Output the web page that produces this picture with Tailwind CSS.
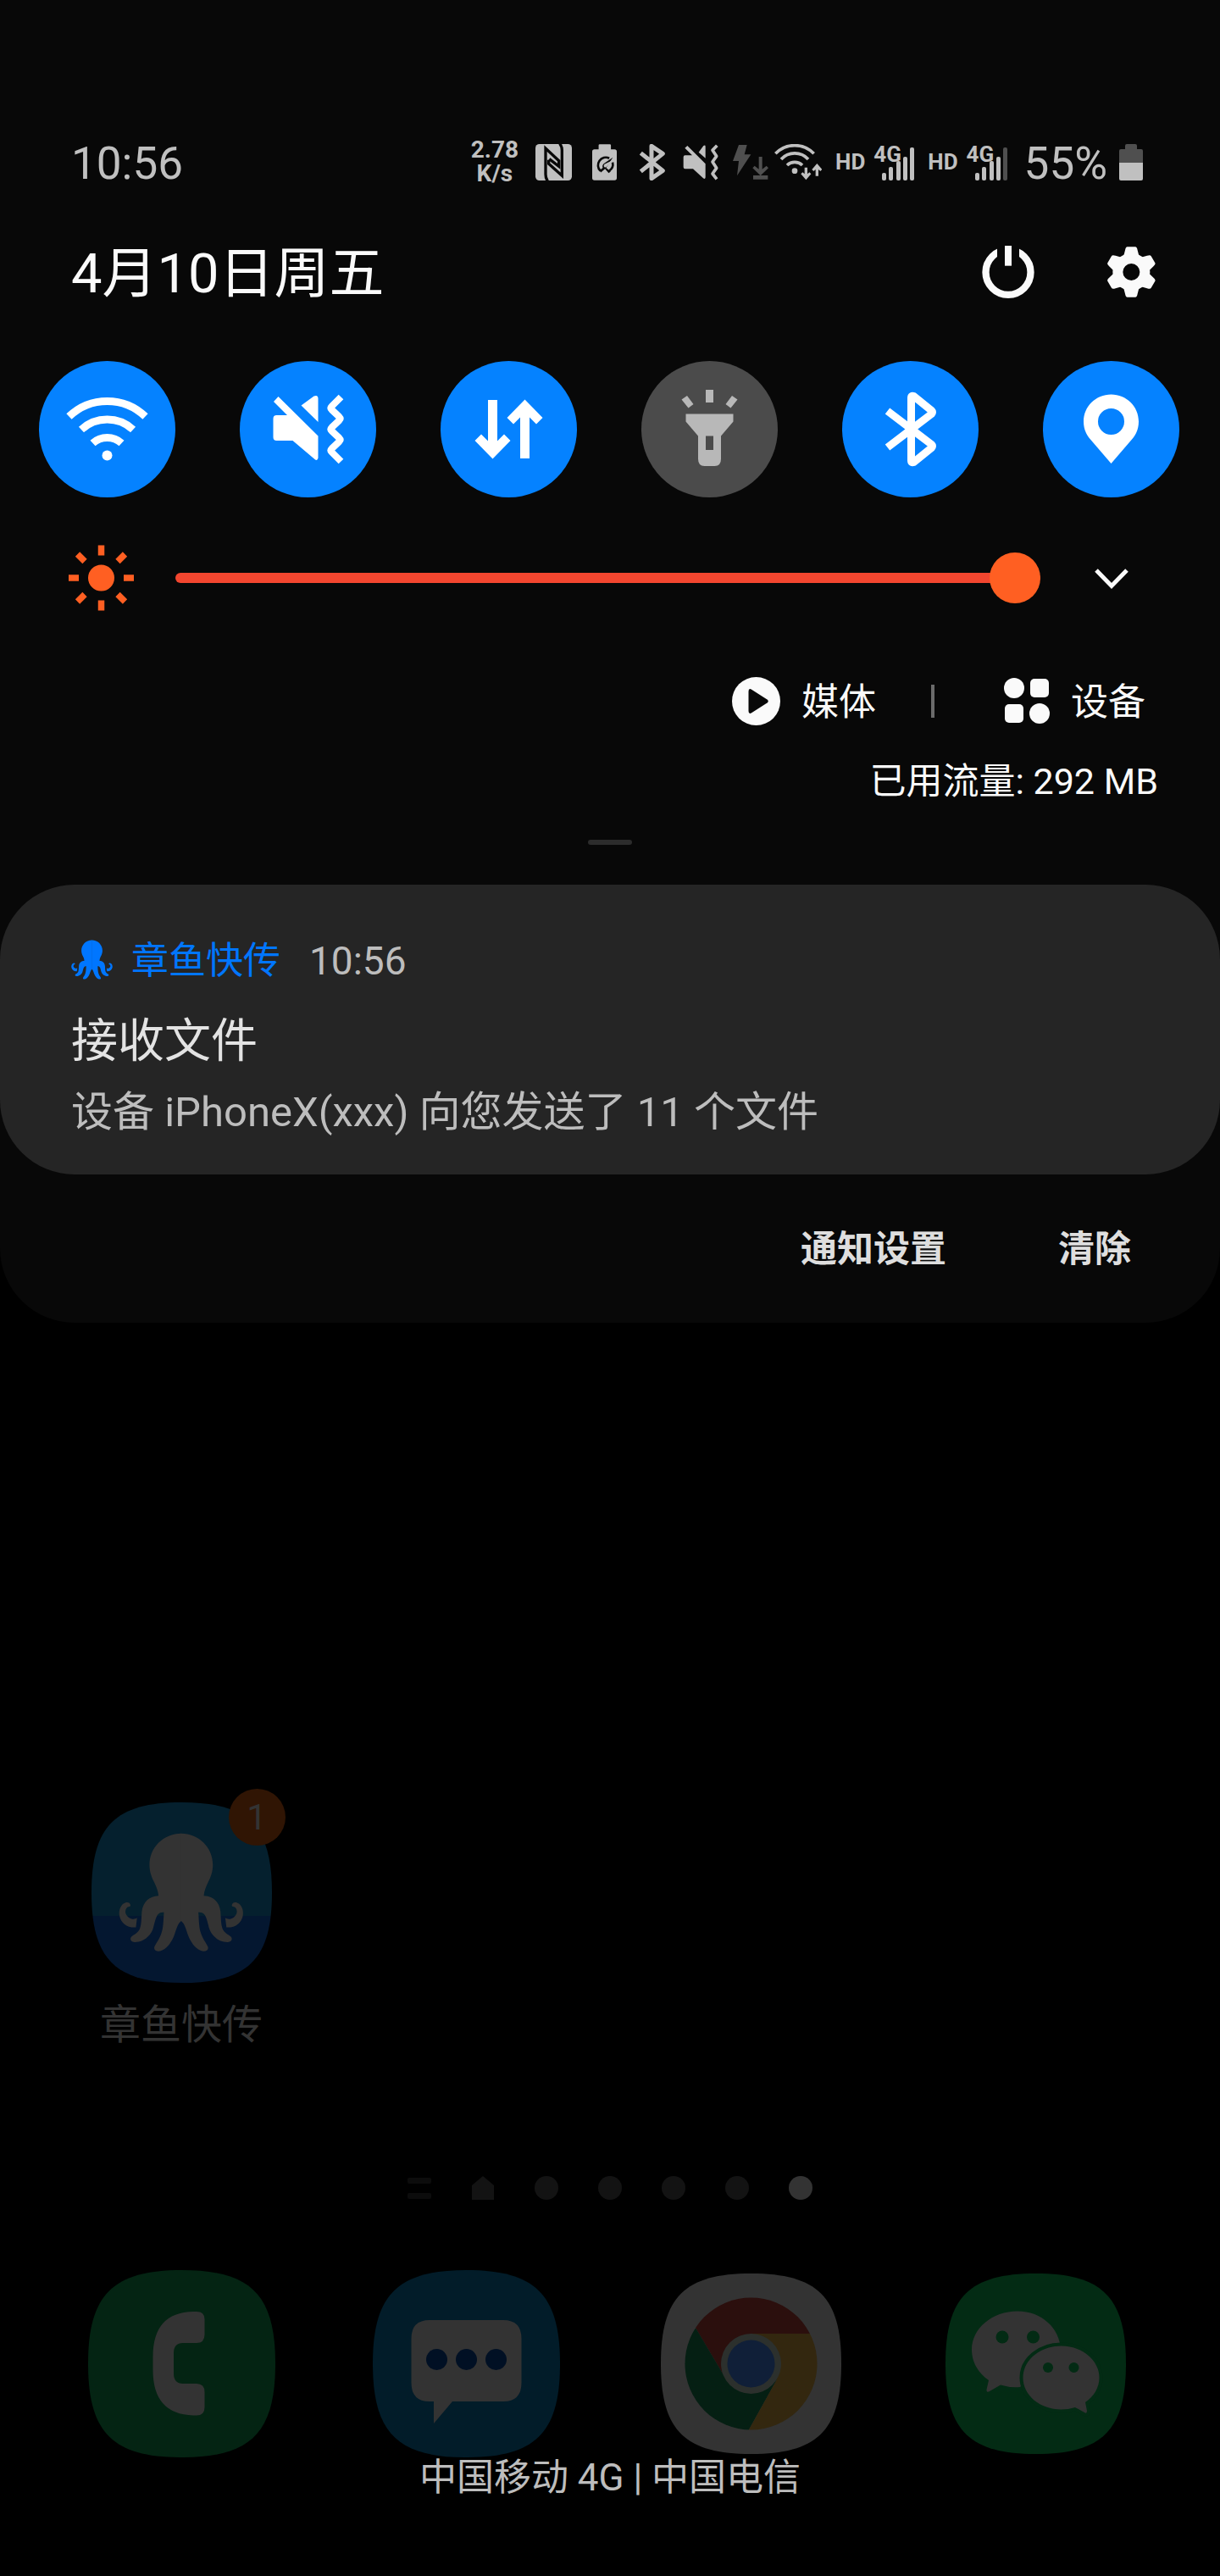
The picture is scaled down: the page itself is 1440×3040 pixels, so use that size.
<!DOCTYPE html>
<html lang="zh-CN">
<head>
<meta charset="utf-8">
<meta name="viewport" content="width=device-width, initial-scale=1">
<title>通知面板</title>
<script src="https://cdn.jsdelivr.net/npm/@tailwindcss/browser@4"></script>
</head>
<body class="bg-black font-['Roboto','Noto_Sans_CJK_SC',sans-serif]">
<svg class="hidden" aria-hidden="true">
  <defs>
    <g id="octopus-half">
      <path d="M409 249H407C345 249 295 298 295 360C295 385 303 405 312 422C320 438 325 452 327 469C295 470 272 490 268 525C266 550 267 570 261 585C255 600 240 606 232 613C224 621 228 632 242 633C275 634 298 610 306 590C314 568 316 535 333 529C338 528 342 527 346 528C344 560 344 585 336 605C330 622 318 638 313 648C308 660 318 667 333 665C355 658 372 636 382 610C390 588 394 568 407 558H409Z"/>
      <path d="M228 503C226 490 212 490 203 497C190 507 186 525 189 540C194 565 215 583 247 581L251 547C243 553 232 553 222 546C208 536 206 520 217 510C222 507 228 508 228 503Z"/>
    </g>
    <g id="octopus">
      <use href="#octopus-half"/>
      <use href="#octopus-half" transform="matrix(-1 0 0 1 814 0)"/>
    </g>
    <path id="squircle" d="M106.5 0C185 0 213 28 213 106.5S185 213 106.5 213 0 185 0 106.5 28 0 106.5 0Z"/>
    <path id="data-arrow" d="M-24.500-34.500H-13.500V14L-5.500 6L2 13.500L-19 35L-40 13.500L-32.500 6L-24.500 14Z"/>
    <g id="tooth"><path d="M1152 500Q1159 486 1163 466Q1165 454 1171 454H1199Q1205 454 1207 466Q1211 486 1218 500Z"/></g>
  </defs>
</svg>

<div class="flex min-h-screen flex-col">
  <section class="rounded-b-[88px] bg-[#080808]" aria-label="快捷设置">
    <header class="flex h-16 items-center mt-[159px] pr-[91px] pl-[84px] text-[#c0c0c0]">
      <time class="mt-1 text-[53px] leading-16">10:56</time>
      <div class="ml-auto flex h-[43px] items-center">
        <p class="text-center text-[28px] leading-7 font-bold">2.78<br>K/s</p>
        <svg class="ml-5 h-[43px] w-[43px]" viewBox="270 87 129 129"><rect x="270" y="87" width="129" height="129" rx="14" fill="currentColor"/><g fill="none" stroke="#080808" stroke-width="10"><path d="M313 218Q306 207 306 194V102L353 146V166L319 140"/><path d="M356 85Q364 96 364 109V199L317 157V143"/></g></svg>
        <svg class="ml-6 h-[43px] w-[29px]" viewBox="470 87 88 129"><path fill="currentColor" d="M497 87H533Q537 87 537 91V105H550Q558 105 558 113V208Q558 216 550 216H478Q470 216 470 208V113Q470 105 478 105H493V91Q493 87 497 87Z"/><g fill="none" stroke="#080808" stroke-width="8"><path d="M499 182A28 28 0 0 1 531 137M543 152A28 28 0 0 1 531 182"/></g><path fill="#080808" d="M544 134L520 171L536 185L529 190L516 175L501 188L496 181L508 171Q504 163 512 156Z"/><path fill="currentColor" d="M542 145L521 168Q514 172 512 167T514 158Z"/></svg>
        <svg class="ml-[26px] h-[43px] w-8" viewBox="638 87 96 129"><path fill="none" stroke="currentColor" stroke-width="15" stroke-linejoin="round" d="M645 119L723 181L683 209V94L723 121L645 184"/></svg>
        <svg class="ml-5 h-[43px] w-[43px]" viewBox="795 87 129 129"><path fill="currentColor" d="M797 133q0-6 6-6H828L802 101L811 93L875 157V205q-1 8-8 3L831 175H803q-6 0-6-6ZM851 116L868 93q7-4 7 3V137Z"/><path fill="none" stroke="currentColor" stroke-width="11" stroke-linejoin="round" d="M916 92L900 109L914 130L900 150L914 172L900 192L915 211"/></svg>
        <svg class="ml-4 h-[43px] w-[42px] text-[#4f4f4f]" viewBox="970 87 126 129"><path fill="currentColor" d="M991 90H1020L1011 124H1034L985 199L991 147H970ZM1062 132H1074V176L1089 164L1096 172L1068 199L1040 172L1047 164L1062 176ZM1042 198H1094V212H1042Z"/></svg>
        <svg class="ml-[7px] h-[43px] w-14" viewBox="1117 87 168 129"><g fill="none" stroke="currentColor" stroke-width="11"><path d="M1121 121A94 94 0 0 1 1257 121M1141 141A65 65 0 0 1 1237 141M1162 162A39 39 0 0 1 1216 162"/></g><circle cx="1189" cy="182" r="10" fill="currentColor"/><g fill="currentColor" stroke="#080808" stroke-width="14" paint-order="stroke"><path d="M1224 170H1234V193L1241 187L1247 193L1229 214L1211 193L1217 187L1224 193Z"/><path d="M1263 200H1273V177L1280 183L1286 177L1268 156L1250 177L1256 183L1263 177Z"/></g></svg>
        <span class="ml-4 text-[26px] leading-8 font-bold">HD</span>
        <div class="relative ml-2.5 h-[43px] w-12">
          <svg class="size-full" viewBox="0 0 48 43"><g fill="currentColor"><rect x="10" y="34" width="5" height="9" rx="2"/><rect x="18" y="27" width="5" height="16" rx="2"/><rect x="27" y="20" width="5" height="23" rx="2"/><rect x="35" y="15" width="5" height="28" rx="2"/><rect x="43" y="4" width="5" height="39" rx="2"/></g></svg>
          <span class="absolute top-0 left-0 text-[26px] leading-6 font-bold">4G</span>
        </div>
        <span class="ml-4 text-[26px] leading-8 font-bold">HD</span>
        <div class="relative ml-2.5 h-[43px] w-12">
          <svg class="size-full" viewBox="0 0 48 43"><g fill="currentColor"><rect x="10" y="34" width="5" height="9" rx="2"/><rect x="18" y="27" width="5" height="16" rx="2"/><rect x="27" y="20" width="5" height="23" rx="2"/><rect x="35" y="15" width="5" height="28" rx="2"/><rect x="43" y="4" width="5" height="39" rx="2" fill="#4f4f4f"/></g></svg>
          <span class="absolute top-0 left-0 text-[26px] leading-6 font-bold">4G</span>
        </div>
        <span class="mt-1 ml-5 text-[53px] leading-16">55%</span>
        <svg class="ml-3.5 h-[43px] w-7" viewBox="0 0 28 43"><path fill="#4f4f4f" d="M9 0H19Q21 0 21 2V6H26Q28 6 28 8V22H0V8Q0 6 2 6H7V2Q7 0 9 0Z"/><path fill="currentColor" d="M0 22H28V41Q28 43 26 43H2Q0 43 0 41Z"/></svg>
      </div>
    </header>

    <div class="mt-[58px] flex h-20 items-center pr-[76px] pl-[84px] text-[#fafafa]">
      <h1 class="mt-1 text-[65px] leading-20">4月10日周五</h1>
      <button class="ml-auto" aria-label="电源"><svg class="block size-[62px]" viewBox="660 451 186 186"><circle cx="753" cy="545" r="79.500" fill="none" stroke="currentColor" stroke-width="25"/><path fill="#080808" d="M714 445H792V530H714Z"/><path fill="currentColor" d="M741 450H765V522H741Z"/></svg></button>
      <button class="ml-[86px]" aria-label="设置"><svg class="block h-[60px] w-[57px]" viewBox="1100 453 171 180"><g fill="currentColor"><use href="#tooth"/><use href="#tooth" transform="rotate(60 1185 543)"/><use href="#tooth" transform="rotate(120 1185 543)"/><use href="#tooth" transform="rotate(180 1185 543)"/><use href="#tooth" transform="rotate(240 1185 543)"/><use href="#tooth" transform="rotate(300 1185 543)"/></g><circle cx="1185" cy="543" r="48" fill="none" stroke="currentColor" stroke-width="36"/></svg></button>
    </div>

    <div class="mt-[65px] flex justify-between pr-12 pl-[46px] text-white">
      <button class="size-[161px] rounded-full bg-[#0582ff]" aria-label="WLAN"><svg viewBox="-80.500 -80.500 161 161"><g fill="none" stroke="currentColor" stroke-width="9"><path d="M-45-15A65 65 0 0 1 45-15M-30.500.500A45 45 0 0 1 30.500.500M-17 16.500A25.500 25.500 0 0 1 17 16.500"/></g><circle cy="31" r="6" fill="currentColor"/></svg></button>
      <button class="size-[161px] rounded-full bg-[#0582ff]" aria-label="静音"><svg viewBox="-80.500 -80.500 161 161"><path fill="currentColor" d="M-41-12.500q0-4 4-4H-24.500L-40.500-32.500L-35-38.500L12 8V34q-1 4-4 1.500L-18 13.500H-37q-4 0-4-4ZM-8-28L7-39q5-2 5 3V-8.500Z"/><path fill="none" stroke="currentColor" stroke-width="8" stroke-linejoin="round" d="M39-38L28-27Q26-25 28-23L37-14.500Q39-12.500 37-10.500L28-2Q26 0 28 2L37 10.500Q39 12.500 37 14.500L28 23Q26 25 28 27L39 38"/></svg></button>
      <button class="size-[161px] rounded-full bg-[#0582ff]" aria-label="移动数据"><svg viewBox="-80.500 -80.500 161 161" fill="currentColor"><use href="#data-arrow"/><use href="#data-arrow" transform="rotate(180)"/></svg></button>
      <button class="size-[161px] rounded-full bg-[#4b4b4b] text-[#b8b8b8]" aria-label="手电筒"><svg viewBox="-80.500 -80.500 161 161"><path fill="currentColor" fill-rule="evenodd" d="M-4.500-46.500H4.500V-31.500H-4.500ZM-33-35L-26.500-39.500L-19-29.500L-25-25ZM33-35L26.500-39.500L19-29.500L25-25ZM-28-18H28V-9L13.500 8V35Q13.500 43.500 6 43.500H-6Q-13.500 43.500-13.500 35V8L-28-9ZM-4.500 8V24.500H4.500V8Z"/></svg></button>
      <button class="size-[161px] rounded-full bg-[#0582ff]" aria-label="蓝牙"><svg viewBox="-80.500 -80.500 161 161"><path fill="none" stroke="currentColor" stroke-width="9" stroke-linejoin="round" d="M-27-21.500L25 18Q27 20 25 22L4 39Q1 40 1 37V-37Q1-40 4-39L25-22Q27-20 25-18L-27 21.500"/></svg></button>
      <button class="size-[161px] rounded-full bg-[#0582ff]" aria-label="位置"><svg viewBox="-80.500 -80.500 161 161"><path fill="currentColor" fill-rule="evenodd" d="M0-41C18-41 32.500-27 32.500-9C32.500 0 29 7 24.500 12L0 40.500L-24.500 12C-29 7-32.500 0-32.500-9C-32.500-27-18-41 0-41ZM0-24.500A15.500 15.500 0 1 0 0 6.500A15.500 15.500 0 1 0 0-24.500Z"/></svg></button>
    </div>

    <div class="mt-[55px] flex h-20 items-center pr-[107px] pl-20">
      <svg class="h-20 w-[79px] shrink-0 text-[#ff5f22]" viewBox="-39.500 -40 79 80" aria-hidden="true"><circle r="15.500" fill="currentColor"/><g stroke="currentColor" stroke-width="7.500"><path d="M0-38.500V-26.500M0 26.500V38.500M-38.500 0H-26.500M26.500 0H38.500M-28-28L-19.500-19.500M28-28L19.500-19.500M-28 28L-19.500 19.500M28 28L19.500 19.500"/></g></svg>
      <input type="range" min="0" max="100" value="100" aria-label="亮度" class="ml-12 h-15 min-w-0 flex-1 appearance-none bg-transparent [&::-webkit-slider-runnable-track]:h-3 [&::-webkit-slider-runnable-track]:rounded-full [&::-webkit-slider-runnable-track]:bg-[#f2462f] [&::-webkit-slider-thumb]:-mt-6 [&::-webkit-slider-thumb]:size-15 [&::-webkit-slider-thumb]:appearance-none [&::-webkit-slider-thumb]:rounded-full [&::-webkit-slider-thumb]:bg-[#ff5f22]">
      <button class="ml-[63px] text-[#fafafa]" aria-label="展开"><svg class="block h-7 w-[42px]" viewBox="0 0 42 28"><path fill="none" stroke="currentColor" stroke-width="5" d="M3 5L21 23.500L39 5"/></svg></button>
    </div>

    <div class="mt-[75px] flex h-15 items-center justify-end pr-[88px] text-[44px] leading-15 text-[#fafafa]">
      <button class="flex items-center gap-[25px]"><svg class="size-[57px]" viewBox="0 0 57 57"><circle cx="28.500" cy="28.500" r="28.500" fill="currentColor"/><path fill="#080808" d="M19.500 17Q19.500 12.500 23.500 15L41.500 26.500Q44 28.500 41.500 30.500L23.500 42Q19.500 44.500 19.500 40Z"/></svg><span class="mt-1">媒体</span></button>
      <span class="ml-[65px] h-[39px] w-1 bg-[#6b6b6b]"></span>
      <button class="ml-[82px] flex items-center gap-[25px]"><svg class="size-[54px]" viewBox="0 0 54 54" fill="currentColor"><circle cx="12" cy="12" r="12"/><rect x="31" y="1" width="22" height="22" rx="5"/><rect x="1" y="31" width="22" height="22" rx="5"/><circle cx="42" cy="42" r="12"/></svg><span class="mt-1">设备</span></button>
    </div>
    <p class="mt-[35px] pr-[73px] text-right text-[43px] leading-15 text-[#fafafa]">已用流量: 292 MB</p>
    <div class="mx-auto mt-[39px] h-1.5 w-[52px] rounded-full bg-[#2c2c2c]"></div>

    <article class="mt-[47px] rounded-[88px] bg-[#252525] px-[84px] pt-[58px] pb-[43px]">
      <div class="flex h-15 items-center leading-15">
        <svg class="h-[47px] w-[49px] text-[#0076ff]" viewBox="186 247 442 420" fill="currentColor" aria-hidden="true"><use href="#octopus"/></svg>
        <span class="mt-1 ml-[22px] text-[44px] text-[#0076ff]">章鱼快传</span>
        <time class="mt-1 ml-[34px] text-[46px] text-[#bdbdbd]">10:56</time>
      </div>
      <h2 class="mt-[30px] text-[55px] leading-18 text-[#e3e3e3]">接收文件</h2>
      <p class="mt-[19px] text-[49px] leading-15 text-[#bdbdbd]">设备 iPhoneX(xxx) 向您发送了 11 个文件</p>
    </article>

    <div class="flex h-[175px] items-center justify-end gap-[132px] pr-[105px] text-[43px] leading-15 font-bold text-[#dedede]">
      <button>通知设置</button>
      <button>清除</button>
    </div>
  </section>

  <main class="flex flex-1 flex-col justify-end pb-[86px] text-[#333]">
    <div class="grid grid-cols-4 pr-[50px] pl-[46px]">
      <a href="#" class="flex flex-col items-center">
        <span class="relative">
          <svg class="block size-[213px]" viewBox="0 0 213 213"><clipPath id="app-shape"><use href="#squircle"/></clipPath><g clip-path="url(#app-shape)"><path fill="#05202e" d="M0 0H213V134H0Z"/><path fill="#041730" d="M0 134H213V213H0Z"/></g><svg width="213" height="213" viewBox="90 139 638 638" fill="currentColor"><use href="#octopus"/></svg></svg>
          <span class="absolute -top-4 -right-4 flex size-[67px] items-center justify-center rounded-full bg-[#301504] text-[42px]">1</span>
        </span>
        <span class="mt-5 text-[48px] leading-15">章鱼快传</span>
      </a>
    </div>
    <div class="mt-[148px] flex justify-center gap-[47px] text-[#131313]" aria-hidden="true">
      <svg class="size-7" viewBox="0 0 28 28" fill="#0c0c0c"><rect y="2" width="28" height="7" rx="2"/><rect y="20" width="28" height="7" rx="2"/></svg>
      <svg class="size-7" viewBox="0 0 28 28"><path fill="currentColor" d="M14 0L27 11V28H1V11Z"/></svg>
      <span class="size-7 rounded-full bg-[#131313]"></span>
      <span class="size-7 rounded-full bg-[#131313]"></span>
      <span class="size-7 rounded-full bg-[#131313]"></span>
      <span class="size-7 rounded-full bg-[#131313]"></span>
      <span class="size-7 rounded-full bg-[#333]"></span>
    </div>
    <nav class="mt-[83px] grid grid-cols-4 place-items-center pr-[50px] pl-[46px]">
      <a href="#" aria-label="电话"><svg class="block size-[221px]" viewBox="0 0 221 221"><use href="#squircle" transform="scale(1.0376)" fill="#042413"/><path fill="currentColor" d="M124 49H128Q137.500 49 137.500 58V76Q137.500 86 128 86H112Q101 86 101 98V122Q101 134 112 134H128Q137.500 134 137.500 144V162Q137.500 171.500 128 171.500H124Q76.500 170 76.500 118V102Q76.500 50 124 49Z"/></svg></a>
      <a href="#" aria-label="信息"><svg class="block size-[221px]" viewBox="0 0 221 221"><use href="#squircle" transform="scale(1.0376)" fill="#021c29"/><path fill="currentColor" d="M67 59H154Q175.500 59 175.500 81V133Q175.500 155 154 155H94L72 181V155H67Q45.500 155 45.500 133V81Q45.500 59 67 59Z"/><g fill="#011024"><circle cx="75.500" cy="105.500" r="12.500"/><circle cx="110.500" cy="105.500" r="12.500"/><circle cx="145.500" cy="105.500" r="12.500"/></g></svg></a>
      <a href="#" aria-label="Chrome"><svg class="block size-[213px]" viewBox="0 0 213 213"><use href="#squircle" fill="currentColor"/><clipPath id="chrome-disc"><circle cx="106.500" cy="106.500" r="78"/></clipPath><g clip-path="url(#chrome-disc)"><path fill="#2b0f0d" d="M0 0H213V71H106L73 118L41.500 65Z"/><path fill="#051f13" d="M41.500 65L73 118L106 130L137 125L103 186H0V65Z"/><path fill="#33270f" d="M213 71H106V120L137 125L103 186H213Z"/></g><circle cx="106.500" cy="106.500" r="35.500" fill="#2c302d"/><circle cx="106.500" cy="106.500" r="28" fill="#101f38"/></svg></a>
      <a href="#" aria-label="微信"><svg class="block size-[213px]" viewBox="0 0 213 213"><use href="#squircle" fill="#032b14"/><path fill="currentColor" d="M85 44.500C55 44.500 31 65 31 90C31 104 38 117 51 126L48.500 137Q48 141 52 139L65 131.500Q76 135 88 134L136 90C135 65 114 44.500 85 44.500Z"/><g fill="currentColor" stroke="#032b14" stroke-width="8" paint-order="stroke"><path d="M136.500 85.500C161 85.500 181.500 102 181.500 123C181.500 135 175 145 165 152L167 162Q167 166 164 164L153 158Q145 160.500 136.500 160.500C112 160.500 91.500 144 91.500 123S112 85.500 136.500 85.500Z"/></g><g fill="#032b14"><circle cx="67" cy="75" r="7.500"/><circle cx="103.500" cy="75" r="7.500"/><circle cx="121" cy="111" r="6"/><circle cx="151.500" cy="111" r="6"/></g></svg></a>
    </nav>
    <p class="relative -mt-1.5 text-center text-[44px] leading-15 text-[#bdbdbd]">中国移动 4G | 中国电信</p>
  </main>
</div>
</body>
</html>
